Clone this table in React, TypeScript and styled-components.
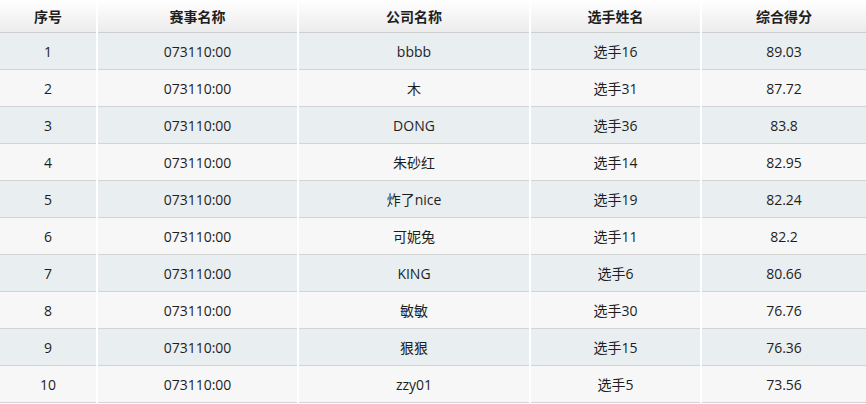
import * as React from "react";
import styled, { createGlobalStyle } from "styled-components";

// Data
interface Entry {
  rank: number;
  contest: string;
  company: string;
  player: string;
  score: string;
}

const entries: Entry[] = [
  { rank: 1, contest: "073110:00", company: "bbbb", player: "选手16", score: "89.03" },
  { rank: 2, contest: "073110:00", company: "木", player: "选手31", score: "87.72" },
  { rank: 3, contest: "073110:00", company: "DONG", player: "选手36", score: "83.8" },
  { rank: 4, contest: "073110:00", company: "朱砂红", player: "选手14", score: "82.95" },
  { rank: 5, contest: "073110:00", company: "炸了nice", player: "选手19", score: "82.24" },
  { rank: 6, contest: "073110:00", company: "可妮兔", player: "选手11", score: "82.2" },
  { rank: 7, contest: "073110:00", company: "KING", player: "选手6", score: "80.66" },
  { rank: 8, contest: "073110:00", company: "敏敏", player: "选手30", score: "76.76" },
  { rank: 9, contest: "073110:00", company: "狠狠", player: "选手15", score: "76.36" },
  { rank: 10, contest: "073110:00", company: "zzy01", player: "选手5", score: "73.56" },
];

const columns = [
  { title: "序号", width: 97 },
  { title: "赛事名称", width: 201 },
  { title: "公司名称", width: 232 },
  { title: "选手姓名", width: 171 },
  { title: "综合得分", width: 165 },
];

const GlobalStyle = createGlobalStyle`
  html, body {
    margin: 0;
    padding: 0;
    background: #ffffff;
  }
  body {
    font-family: "Open Sans", "Noto Sans CJK SC", sans-serif;
  }
`;

const Table = styled.table`
  width: 866px;
  border-collapse: collapse;
  table-layout: fixed;
  font-size: 14px;
  color: #1e1e1e;
`;

const HeadCell = styled.th`
  height: 32px;
  padding: 0;
  font-weight: bold;
  text-align: center;
  background: linear-gradient(to bottom, #ffffff 0%, #f3f3f3 60%, #ececec 100%);
  border-bottom: 1px solid #cfcfcf;
  border-left: 2px solid #ffffff;

  &:first-child {
    border-left: none;
  }
`;

const Row = styled.tr<{ $odd: boolean }>`
  background: ${(p) => (p.$odd ? "#e9eef1" : "#f7f7f7")};
`;

const Cell = styled.td`
  height: 36px;
  padding: 0;
  text-align: center;
  border-bottom: 1px solid #d3d3d3;
  border-left: 2px solid #ffffff;

  &:first-child {
    border-left: none;
  }
`;

export default function App() {
  return (
    <>
      <GlobalStyle />
      <Table>
        <colgroup>
          {columns.map((c) => (
            <col key={c.title} style={{ width: c.width }} />
          ))}
        </colgroup>
        <thead>
          <tr>
            {columns.map((c) => (
              <HeadCell key={c.title}>{c.title}</HeadCell>
            ))}
          </tr>
        </thead>
        <tbody>
          {entries.map((e) => (
            <Row key={e.rank} $odd={e.rank % 2 === 1}>
              <Cell>{e.rank}</Cell>
              <Cell>{e.contest}</Cell>
              <Cell>{e.company}</Cell>
              <Cell>{e.player}</Cell>
              <Cell>{e.score}</Cell>
            </Row>
          ))}
        </tbody>
      </Table>
    </>
  );
}
